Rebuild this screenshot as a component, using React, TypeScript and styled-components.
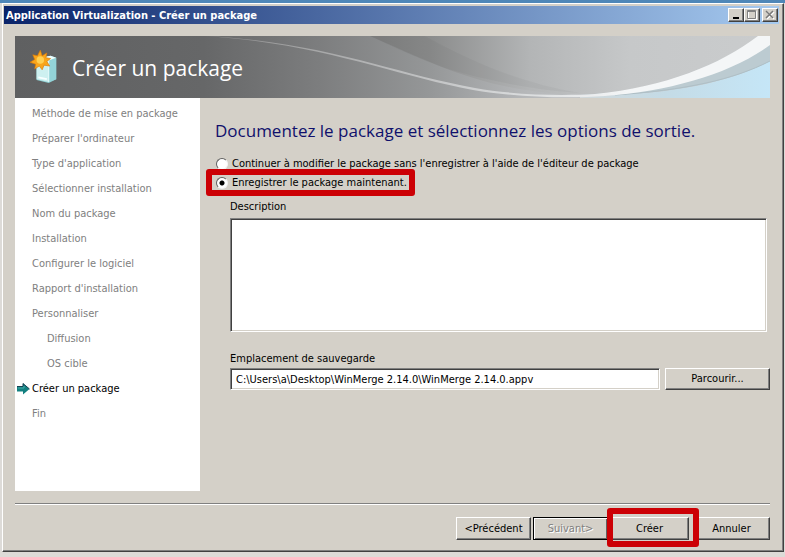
import React from "react";
import styled, { createGlobalStyle, css } from "styled-components";

const uiFont = `"DejaVu Sans Condensed", "Noto Sans", sans-serif`;
const displayFont = `"Open Sans", "Noto Sans", sans-serif`;
const face = "#d4d0c8";

const GlobalStyle = createGlobalStyle`
  * { box-sizing: border-box; }
  html, body { margin: 0; }
  body {
    font-family: ${uiFont};
    font-size: 11px;
    line-height: 14px;
    color: #000;
    background: #d9d7d2;
  }
`;

const raised = css`
  border: 1px solid;
  border-color: #fff #404040 #404040 #fff;
  box-shadow: inset -1px -1px 0 #808080;
`;

const Desktop = styled.div`
  display: flex;
  min-height: 100vh;
  padding: 0 1px 5px 2px;
  border-top: 3px solid #4f87b8;
  background: #dddbd8;
`;

const Window = styled.main`
  flex: 1;
  display: flex;
  flex-direction: column;
  min-width: 0;
  padding: 2px 4px 11px 1px;
  background: ${face};
  border: 1px solid;
  border-color: #fff #404040 #404040 #fff;
  box-shadow: inset -1px -1px 0 #808080;
`;

const TitleBar = styled.header`
  display: flex;
  align-items: center;
  justify-content: space-between;
  height: 18px;
  padding: 0 1px 0 2px;
  background: linear-gradient(90deg, #0a246a, #a6caf0);
`;

const Caption = styled.span`
  padding-top: 1px;
  font: bold 11px/14px ${uiFont};
  color: #fff;
  white-space: nowrap;
`;

const CaptionButtons = styled.div`
  display: flex;
`;

const CaptionButton = styled.button<{ $apart?: boolean }>`
  ${raised}
  display: grid;
  place-items: center;
  width: 16px;
  height: 14px;
  padding: 0;
  margin-left: ${(p) => (p.$apart ? "2px" : "0")};
  background: ${face};
`;

const Body = styled.div`
  flex: 1;
  display: flex;
  flex-direction: column;
  padding: 12px 9px 0 11px;
`;

const Banner = styled.div`
  position: relative;
  display: flex;
  align-items: center;
  height: 62px;
  padding-left: 15px;
  gap: 13px;
  background: #626364;
`;

const BannerArt = styled.svg`
  position: absolute;
  inset: 0;
  width: 100%;
  height: 100%;
`;

const BannerIcon = styled.svg`
  position: relative;
  width: 29px;
  height: 34px;
`;

const BannerTitle = styled.h1`
  position: relative;
  margin: 0;
  padding-top: 2px;
  font: 400 21px/28px ${displayFont};
  color: #fff;
`;

const Columns = styled.div`
  flex: 1;
  display: flex;
`;

const Sidebar = styled.nav`
  flex: 0 0 185px;
  padding-top: 3px;
  background: #fff;
`;

const Steps = styled.ol`
  margin: 0;
  padding: 0;
  list-style: none;
`;

const Step = styled.li<{ $current?: boolean; $nested?: boolean }>`
  display: flex;
  align-items: center;
  height: 25px;
  padding-left: ${(p) => (p.$current ? "2px" : p.$nested ? "32px" : "17px")};
  gap: 2px;
  color: ${(p) => (p.$current ? "#000" : "#808080")};
`;

const Content = styled.section`
  flex: 1;
  min-width: 0;
  display: flex;
  flex-direction: column;
  padding: 19px 0 0 15px;
`;

const Heading = styled.h2`
  margin: 0 0 9px;
  font: 400 17px/28px ${displayFont};
  color: #10106c;
  white-space: nowrap;
`;

const RadioRow = styled.label`
  display: flex;
  align-items: center;
  height: 19px;
  padding-left: 1px;
  gap: 4px;
  white-space: nowrap;
`;

const Radio = styled.input`
  appearance: none;
  flex: none;
  width: 12px;
  height: 12px;
  margin: 0;
  border: 1px solid;
  border-color: #606060 #f4f4f4 #f4f4f4 #606060;
  border-radius: 50%;
  background: #fff;
  &:checked {
    background: radial-gradient(circle, #000 0 2px, #fff 3px);
  }
`;

const marker = css`
  content: "";
  position: absolute;
  border: 6px solid #cc0005;
  border-radius: 3px;
  pointer-events: none;
`;

const MarkedOption = styled.div`
  position: relative;
  align-self: flex-start;
  &::after {
    ${marker}
    inset: -4px -8px -4px -9px;
  }
`;

const MarkedButton = styled.div`
  position: relative;
  display: flex;
  &::after {
    ${marker}
    inset: -9px -10px -7px -3px;
  }
`;

const Fields = styled.div`
  display: flex;
  flex-direction: column;
  padding: 8px 3px 0 15px;
`;

const FieldLabel = styled.label`
  height: 14px;
`;

const sunken = css`
  border: 1px solid;
  border-color: #808080 #fff #fff #808080;
  box-shadow: inset 1px 1px 0 #404040, inset -1px -1px 0 ${face};
  background: #fff;
  color: #000;
  outline: none;
  border-radius: 0;
  font: inherit;
`;

const Description = styled.textarea`
  ${sunken}
  width: 100%;
  height: 114px;
  margin: 4px 0 20px;
  padding: 4px;
  resize: none;
`;

const PathRow = styled.div`
  display: flex;
  gap: 5px;
  margin: 2px -3px 0 0;
`;

const PathInput = styled.input`
  ${sunken}
  flex: 1;
  min-width: 0;
  height: 22px;
  padding: 0 5px;
`;

const Button = styled.button<{ $width: number; $default?: boolean }>`
  ${raised}
  width: ${(p) => p.$width}px;
  height: 23px;
  padding: 0;
  background: ${face};
  color: #000;
  font: inherit;
  ${(p) =>
    p.$default &&
    css`
      border-color: #000;
      box-shadow: inset 1px 1px 0 #fff, inset -1px -1px 0 #606060;
    `}
  &:disabled {
    color: #808080;
    text-shadow: 1px 1px 0 #fff;
  }
`;

const BrowseButton = styled(Button)`
  height: 22px;
`;

const Divider = styled.hr`
  width: 100%;
  margin: 12px 0;
  border: 0;
  border-top: 1px solid #808080;
  border-bottom: 1px solid #fff;
`;

const Actions = styled.footer`
  display: flex;
  justify-content: flex-end;
  gap: 2px;
`;

const ActionGroup = styled.div`
  display: flex;
  gap: 2px;
  margin-right: 2px;
`;

const steps: { label: string; nested?: boolean; current?: boolean }[] = [
  { label: "Méthode de mise en package" },
  { label: "Préparer l'ordinateur" },
  { label: "Type d'application" },
  { label: "Sélectionner installation" },
  { label: "Nom du package" },
  { label: "Installation" },
  { label: "Configurer le logiciel" },
  { label: "Rapport d'installation" },
  { label: "Personnaliser" },
  { label: "Diffusion", nested: true },
  { label: "OS cible", nested: true },
  { label: "Créer un package", current: true },
  { label: "Fin" },
];

function Swoosh() {
  return (
    <BannerArt viewBox="0 0 755 62" preserveAspectRatio="none" aria-hidden="true">
      <defs>
        <linearGradient id="base">
          <stop offset="0" stopColor="#5f6061" />
          <stop offset="0.25" stopColor="#666768" />
          <stop offset="0.4" stopColor="#7c7d7e" />
          <stop offset="0.55" stopColor="#959798" />
          <stop offset="0.68" stopColor="#b6b8ba" />
          <stop offset="1" stopColor="#ccd0d2" />
        </linearGradient>
        <linearGradient id="upper" gradientUnits="userSpaceOnUse" x1="355" y1="0" x2="755" y2="0">
          <stop offset="0" stopColor="#7e7f7f" />
          <stop offset="0.15" stopColor="#8b8c8c" />
          <stop offset="0.4" stopColor="#b3b5b6" />
          <stop offset="0.65" stopColor="#c6c8c9" />
          <stop offset="1" stopColor="#cacccd" />
        </linearGradient>
        <linearGradient id="line">
          <stop offset="0" stopColor="#8c8c8c" />
          <stop offset="0.3" stopColor="#b4b5b6" />
          <stop offset="0.55" stopColor="#d8dadb" />
          <stop offset="0.75" stopColor="#f4f6f7" />
        </linearGradient>
        <linearGradient id="sky">
          <stop offset="0" stopColor="#d1d8da" />
          <stop offset="0.45" stopColor="#c4dbe6" />
          <stop offset="1" stopColor="#c5e6f7" />
        </linearGradient>
      </defs>
      <rect width="755" height="62" fill="url(#base)" />
      <path d="M355 0C410 24 450 44 505 53C550 61 590 60 638 48C680 37 720 18 743 0Z" fill="url(#upper)" />
      <path d="M410 0C460 28 510 48 565 57C515 54 470 44 430 32C400 22 375 9 355 0Z" fill="#000" opacity="0.03" />
      <path d="M565 60C650 59 710 49 755 25V62H565Z" fill="url(#sky)" />
      <path d="M565 59C650 54 720 32 755 8V25C710 48 650 58 565 60Z" fill="#bccbd1" />
      <path d="M600 59C670 54 718 44 755 25" fill="none" stroke="#aebfc6" />
      <path
        d="M190 0C310 6 380 38 460 52C500 59 545 60 580 58C650 51 705 29 743 0H755V9C715 38 655 55 590 60C550 63 500 61 458 54C380 40 310 8 190 0Z"
        fill="url(#line)"
      />
    </BannerArt>
  );
}

function PackageIcon() {
  return (
    <BannerIcon viewBox="0 0 31 36" aria-hidden="true">
      <path d="M7 9L22 6L28 8V31L20 35L7 32Z" fill="#8fd0d4" />
      <path d="M7 9L20 11V34L7 31Z" fill="#cdf0f0" />
      <path d="M20 11L28 8V31L20 34Z" fill="#93d3d8" />
      <path d="M7 9L22 6L28 8L20 11Z" fill="#edffff" />
      <path d="M20 11V34" stroke="#f0ffff" />
      <path d="M9 29L18 31" stroke="#f7ffff" strokeWidth="2" />
      <path
        d="M11 0L13 6L18 3L17 8L22 9L18 12L21 17L15 16L13 21L10 17L5 20L6 15L0 13L5 10L3 5L8 6Z"
        fill="#f9a51b"
        stroke="#d97908"
        strokeWidth="0.7"
      />
      <circle cx="11" cy="10.500" r="4" fill="#ffd052" />
    </BannerIcon>
  );
}

function CurrentArrow() {
  return (
    <svg width="13" height="12" viewBox="0 0 13 12" aria-hidden="true">
      <path d="M0 3.500H6V0.500L12.500 6L6 11.500V8.500H0Z" fill="#128080" />
      <path d="M0 3.500H6V0.500L12.500 6" fill="none" stroke="#173f50" />
      <path d="M1 5H7V3" fill="none" stroke="#43aaa8" />
    </svg>
  );
}

export default function App() {
  return (
    <Desktop>
      <GlobalStyle />
      <Window>
        <TitleBar>
          <Caption>Application Virtualization - Créer un package</Caption>
          <CaptionButtons>
            <CaptionButton aria-label="Réduire">
              <svg width="12" height="10" viewBox="0 0 12 10">
                <path d="M3 8H9" stroke="#000" strokeWidth="2" />
              </svg>
            </CaptionButton>
            <CaptionButton aria-label="Agrandir">
              <svg width="12" height="10" viewBox="0 0 12 10">
                <path d="M2.500 1.500H10.500V9.500H2.500Z" fill="none" stroke="#fff" />
                <path d="M1.500 0.500H9.500V8.500H1.500ZM1.500 1.500H9.500" fill="none" stroke="#808080" />
              </svg>
            </CaptionButton>
            <CaptionButton aria-label="Fermer" $apart>
              <svg width="12" height="10" viewBox="0 0 12 10">
                <path d="M3 2L10 9M10 2L3 9" stroke="#fff" strokeWidth="1.500" />
                <path d="M2 1L9 8M9 1L2 8" stroke="#777" strokeWidth="1.500" />
              </svg>
            </CaptionButton>
          </CaptionButtons>
        </TitleBar>
        <Body>
          <Banner>
            <Swoosh />
            <PackageIcon />
            <BannerTitle>Créer un package</BannerTitle>
          </Banner>
          <Columns>
            <Sidebar>
              <Steps>
                {steps.map((s) => (
                  <Step
                    key={s.label}
                    $current={s.current}
                    $nested={s.nested}
                    aria-current={s.current ? "step" : undefined}
                  >
                    {s.current && <CurrentArrow />}
                    {s.label}
                  </Step>
                ))}
              </Steps>
            </Sidebar>
            <Content>
              <Heading>Documentez le package et sélectionnez les options de sortie.</Heading>
              <RadioRow>
                <Radio type="radio" name="output" />
                Continuer à modifier le package sans l'enregistrer à l'aide de l'éditeur de package
              </RadioRow>
              <MarkedOption>
                <RadioRow>
                  <Radio type="radio" name="output" defaultChecked />
                  Enregistrer le package maintenant.
                </RadioRow>
              </MarkedOption>
              <Fields>
                <FieldLabel htmlFor="description">Description</FieldLabel>
                <Description id="description" />
                <FieldLabel htmlFor="location">Emplacement de sauvegarde</FieldLabel>
                <PathRow>
                  <PathInput
                    id="location"
                    type="text"
                    defaultValue="C:\Users\a\Desktop\WinMerge 2.14.0\WinMerge 2.14.0.appv"
                  />
                  <BrowseButton $width={105}>Parcourir...</BrowseButton>
                </PathRow>
              </Fields>
            </Content>
          </Columns>
          <Divider />
          <Actions>
            <ActionGroup>
              <Button $width={75}>&lt;Précédent</Button>
              <Button $width={75} $default disabled>
                Suivant&gt;
              </Button>
              <MarkedButton>
                <Button $width={79}>Créer</Button>
              </MarkedButton>
            </ActionGroup>
            <Button $width={77}>Annuler</Button>
          </Actions>
        </Body>
      </Window>
    </Desktop>
  );
}
